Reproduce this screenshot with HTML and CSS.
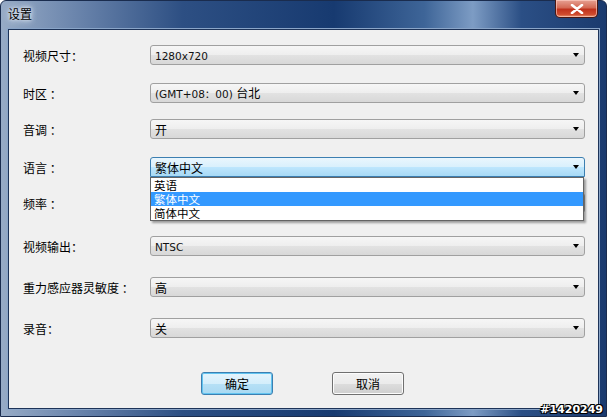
FILE: index.html
```html
<!DOCTYPE html>
<html>
<head>
<meta charset="utf-8">
<link rel="stylesheet" href="styles.css">
</head>
<body>
<div class="window">
  <div class="titlebar">
    <span class="title">设置</span>
    <div class="close"><svg width="14" height="10" viewBox="0 0 14 10"><path d="M2 1 L12 9 M12 1 L2 9" stroke="#fff" stroke-width="2.6" stroke-linecap="round"/></svg></div>
  </div>
  <div class="client">
    <div class="form">
      <div class="row r1"><span class="label">视频尺寸：</span><div class="combo"><span>1280x720</span><i class="arrow"></i></div></div>
      <div class="row r2"><span class="label">时区 ：</span><div class="combo"><span>(GMT+08：00) <b class="cjk">台北</b></span><i class="arrow"></i></div></div>
      <div class="row r3"><span class="label">音调 ：</span><div class="combo"><span class="cjk">开</span><i class="arrow"></i></div></div>
      <div class="row r4"><span class="label">语言 ：</span><div class="combo focus"><span class="cjk">繁体中文</span><i class="arrow"></i>
        <div class="dropdown">
          <div class="item">英语</div>
          <div class="item sel">繁体中文</div>
          <div class="item">简体中文</div>
        </div></div></div>
      <div class="row r5"><span class="label">频率 ：</span><div class="combo"><i class="arrow"></i></div></div>
      <div class="row r6"><span class="label">视频输出：</span><div class="combo"><span>NTSC</span><i class="arrow"></i></div></div>
      <div class="row r7"><span class="label">重力感应器灵敏度 ：</span><div class="combo"><span class="cjk">高</span><i class="arrow"></i></div></div>
      <div class="row r8"><span class="label">录音：</span><div class="combo"><span class="cjk">关</span><i class="arrow"></i></div></div>
    </div>
    <div class="buttons">
      <div class="btn default">确定</div>
      <div class="btn">取消</div>
    </div>
  </div>
  <div class="watermark">#1420249</div>
</div>
</body>
</html>
```
FILE: styles.css
```css
html, body {
  margin: 0;
  padding: 0;
  width: 607px;
  height: 417px;
  overflow: hidden;
  background: #ffffff;
}
.window {
  position: relative;
  width: 607px;
  height: 417px;
  box-sizing: border-box;
  border: 1px solid #1a2c4e;
  border-radius: 6px 6px 0 0;
  background:
    linear-gradient(90deg, #97abc6 0%, #6c86ad 12%, #2d4f83 30%, #173a70 55%, #3e6598 70%, #7d9cc4 78%, #2b4f85 86%, #1a3a6e 100%);
  display: flex;
  flex-direction: column;
  font-family: "Noto Sans CJK SC", "Liberation Sans", sans-serif;
  font-size: 12px;
  color: #000;
}
.titlebar {
  height: 28px;
  position: relative;
  display: flex;
  align-items: flex-start;
}
.title {
  margin: 5px 0 0 7px;
  font-size: 12px;
  line-height: 16px;
  color: #000;
  text-shadow: 0 0 6px #dde6f2, 0 0 6px #dde6f2, 0 0 3px #e8eef6;
}
.close {
  position: absolute;
  right: 8px;
  top: -1px;
  width: 43px;
  height: 18px;
  box-sizing: border-box;
  border: 1px solid #4a1712;
  border-top: none;
  border-radius: 0 0 5px 5px;
  background: linear-gradient(#e7a193 0%, #d46a55 45%, #c0321d 55%, #d04b2e 85%, #e79a74 100%);
  box-shadow: inset 0 0 0 1px rgba(255,210,200,0.6);
  display: flex;
  align-items: center;
  justify-content: center;
}
.client {
  margin: 0 7px 7px 7px;
  flex: 1;
  background: #f0f0f0;
  border: 1px solid #1d3358;
  box-shadow: 0 0 0 1px #8aa5c8;
  display: flex;
  flex-direction: column;
}
.form {
  display: flex;
  flex-direction: column;
  padding: 15px 13px 0 14px;
}
.row {
  display: flex;
  align-items: center;
  height: 20px;
}
.r2 { margin-top: 18px; }
.r3 { margin-top: 16px; }
.r4 { margin-top: 18px; }
.r5 { margin-top: 16px; }
.r6 { margin-top: 23px; }
.r7 { margin-top: 21px; }
.r8 { margin-top: 21px; }
.label {
  width: 127px;
  line-height: 16px;
  padding-top: 2px;
  color: #000;
}
.combo {
  position: relative;
  flex: 1;
  height: 20px;
  box-sizing: border-box;
  border: 1px solid #a0a0a0;
  border-radius: 3px;
  background: linear-gradient(#f6f6f6 0%, #eeeeee 50%, #e2e2e2 51%, #d8d8d8 100%);
  display: flex;
  align-items: center;
  padding-left: 4px;
}
.combo span {
  font-family: "DejaVu Sans", "Noto Sans CJK SC", sans-serif;
  font-size: 10.5px;
  line-height: 14px;
  margin-top: 1px;
  color: #111;
}
.combo .cjk {
  font-family: "Noto Sans CJK SC", sans-serif;
  font-size: 12px;
  font-weight: normal;
  color: #000;
}
.combo.focus {
  border-color: #3c7fb1;
  border-radius: 3px 3px 0 0;
  background: linear-gradient(#eaf6fd 0%, #d9f0fc 50%, #bee6fd 51%, #a7d9f5 100%);
}
.arrow {
  position: absolute;
  right: 5px;
  top: 7px;
  width: 0;
  height: 0;
  border-left: 3.5px solid transparent;
  border-right: 3.5px solid transparent;
  border-top: 4px solid #000;
}
.dropdown {
  position: absolute;
  left: -1px;
  right: 0;
  top: 19px;
  background: #fff;
  border: 1px solid #646464;
  box-shadow: 2px 2px 2px rgba(0,0,0,0.35);
  z-index: 5;
}
.item {
  height: 14px;
  line-height: 14px;
  padding-left: 3px;
  font-family: "Noto Sans CJK SC", sans-serif;
  font-size: 11.5px;
  color: #000;
  overflow: hidden;
}
.item.sel {
  background: #3399ff;
  color: #fff;
}
.buttons {
  display: flex;
  justify-content: center;
  gap: 59px;
  margin-top: auto;
  margin-bottom: 13px;
  padding-right: 2px;
}
.btn {
  width: 72px;
  height: 23px;
  box-sizing: border-box;
  border: 1px solid #707070;
  border-radius: 3px;
  background: linear-gradient(#f2f2f2 0%, #ebebeb 50%, #dddddd 51%, #cfcfcf 100%);
  box-shadow: inset 0 0 0 1px #fcfcfc;
  display: flex;
  align-items: center;
  justify-content: center;
  font-size: 12px;
}
.btn.default {
  border-color: #3c7fb1;
  background: linear-gradient(#e5f4fc 0%, #d4eefb 50%, #b6e0f6 51%, #a9d9f2 100%);
  box-shadow: inset 0 0 0 1px #62c4f0;
}
.watermark {
  position: absolute;
  right: 3px;
  bottom: 0px;
  font-family: "DejaVu Sans", sans-serif;
  font-size: 11px;
  font-weight: bold;
  line-height: 13px;
  color: #fff;
  text-shadow: -1px -1px 0 #000, 1px -1px 0 #000, -1px 1px 0 #000, 1px 1px 0 #000;
}
```
